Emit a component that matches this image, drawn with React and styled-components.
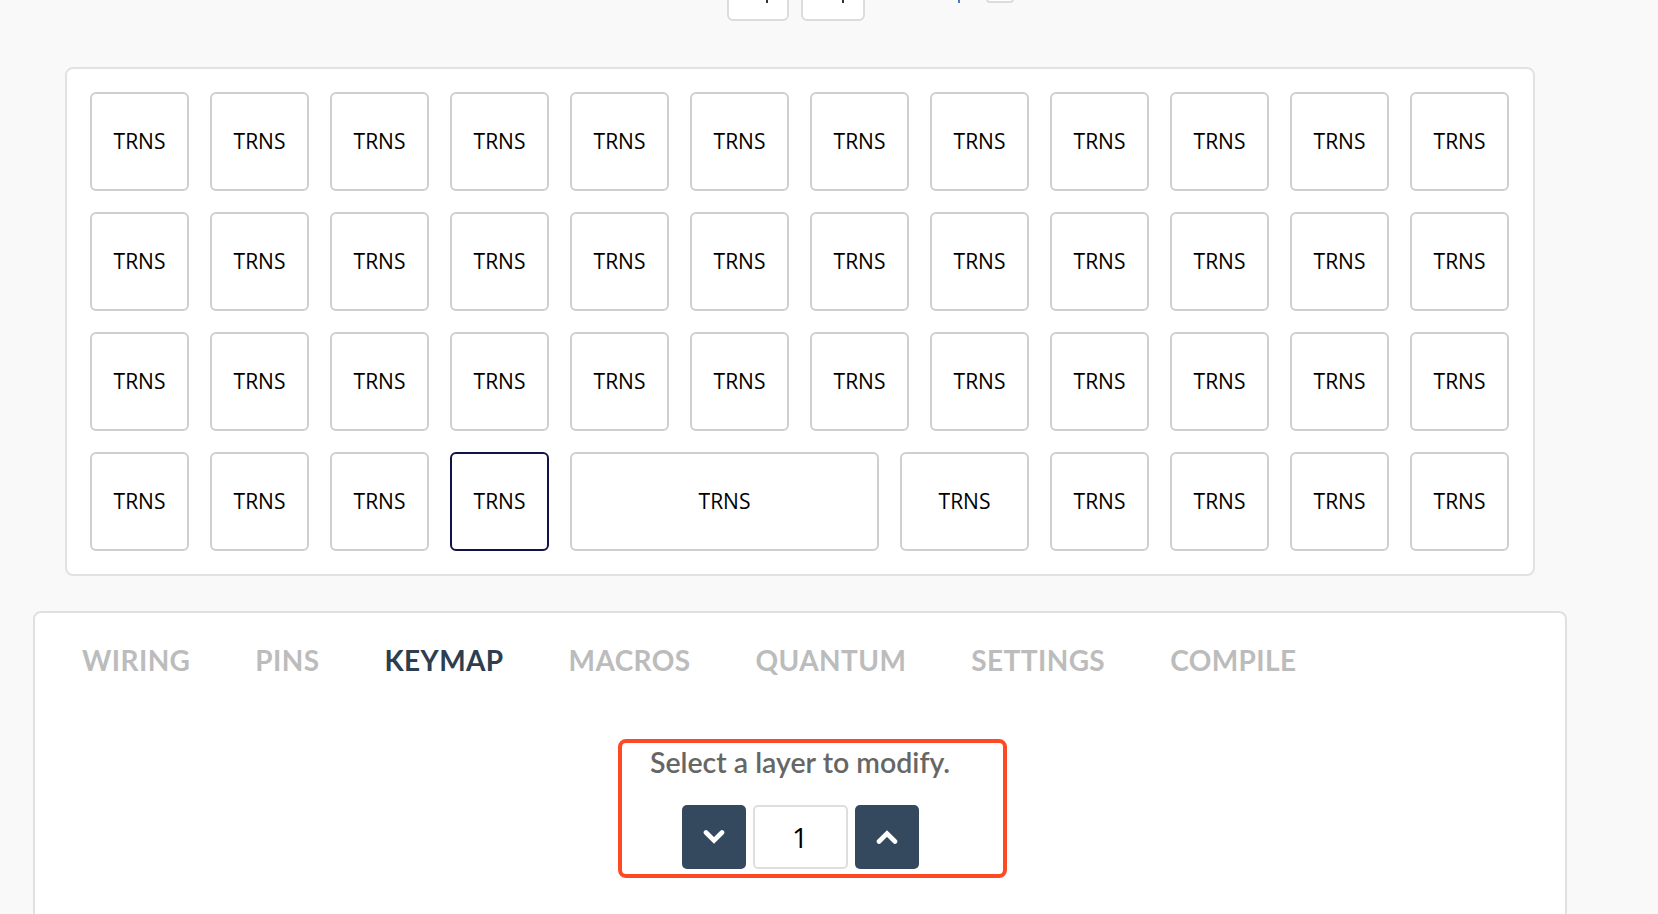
import React, { useState } from 'react'
import styled, { createGlobalStyle } from 'styled-components'

const GlobalStyle = createGlobalStyle`
  html, body {
    margin: 0;
    padding: 0;
    background: #f9f9f9;
    overflow: hidden;
  }
  * {
    box-sizing: border-box;
  }
`

const Page = styled.div`
  width: 1534px;
  margin-left: 33px;
  height: 914px;
  font-family: Lato, 'Open Sans', sans-serif;
`

const TopBar = styled.div`
  display: flex;
  align-items: flex-end;
  height: 21px;
  overflow: hidden;
  padding-left: 694px;
`

const TopButton = styled.div`
  width: ${({ w }) => w}px;
  height: 40px;
  margin-right: ${({ mr }) => mr}px;
  background: #fff;
  border: 2px solid #dcdcdc;
  border-radius: 6px;
  display: flex;
  align-items: flex-end;
  padding: 0 0 16px ${({ mark }) => mark}px;
`

const Mark = styled.span`
  width: 2px;
  height: 3px;
  background: ${({ color }) => color || '#333'};
  margin-bottom: ${({ mb }) => mb || 0}px;
`

const LayerBox = styled.div`
  width: 28px;
  height: 20px;
  margin-left: 26px;
  margin-bottom: 18px;
  border: 2px solid #dcdcdc;
  border-radius: 4px;
  background: #fff;
`

const KeyboardPanel = styled.div`
  width: 1470px;
  margin: 46px 0 0 32px;
  background: #fff;
  border: 2px solid #e2e2e2;
  border-radius: 8px;
  padding: 23px;
  display: flex;
  flex-direction: column;
  gap: 21px;
`

const KeyRow = styled.div`
  display: flex;
  gap: 21px;
`

const Key = styled.div`
  width: ${({ u }) => u * 120 - 21}px;
  height: 99px;
  border: 2px solid ${({ selected }) => (selected ? '#12124a' : '#cfcfcf')};
  border-radius: 6px;
  background: #fff;
  display: flex;
  align-items: center;
  justify-content: center;
  padding-bottom: 2px;
  font-family: 'Open Sans', sans-serif;
  font-size: 21px;
  color: #000;
  cursor: pointer;
`

const TabPanel = styled.div`
  margin-top: 35px;
  width: 1534px;
  height: 400px;
  background: #fff;
  border: 2px solid #e0e0e0;
  border-radius: 8px;
`

const Tabs = styled.div`
  display: flex;
  gap: 65px;
  padding: 30px 0 0 47px;
`

const Tab = styled.div`
  font-family: Lato, sans-serif;
  font-weight: 700;
  font-size: 28px;
  letter-spacing: 0.4px;
  color: ${({ active }) => (active ? '#2c3e50' : '#bcbcbc')};
  cursor: pointer;
`

const LayerSection = styled.div`
  position: relative;
  width: max-content;
  margin: 68px auto 0;
  display: flex;
  flex-direction: column;
  align-items: center;
  gap: 26px;
`

const Highlight = styled.div`
  position: absolute;
  left: 50%;
  margin-left: -182px;
  width: 389px;
  top: -6px;
  height: 139px;
  border: 4px solid #fd4a24;
  border-radius: 8px;
  pointer-events: none;
`

const Prompt = styled.div`
  font-family: Lato, sans-serif;
  font-weight: 600;
  font-size: 28.5px;
  color: #666;
`

const Stepper = styled.div`
  display: flex;
  gap: 7px;
`

const StepButton = styled.button`
  width: 64px;
  height: 64px;
  border: none;
  border-radius: 5px;
  background: #34495e;
  color: #fff;
  display: flex;
  align-items: center;
  justify-content: center;
  padding: 0;
  cursor: pointer;
`

const LayerInput = styled.div`
  width: 95px;
  height: 64px;
  border: 2px solid #dedede;
  border-radius: 5px;
  background: #fff;
  display: flex;
  align-items: center;
  justify-content: center;
  font-family: 'Open Sans', sans-serif;
  font-size: 28px;
  color: #000;
`

const Chevron = ({ up }) => (
  <svg width="22" height="14" viewBox="0 0 22 14">
    <polyline
      points={up ? '3,11.5 11,3.5 19,11.5' : '3,2.5 11,10.5 19,2.5'}
      fill="none"
      stroke="#fff"
      strokeWidth="4.6"
      strokeLinecap="round"
      strokeLinejoin="miter"
    />
  </svg>
)

const rows = [
  [1, 1, 1, 1, 1, 1, 1, 1, 1, 1, 1, 1],
  [1, 1, 1, 1, 1, 1, 1, 1, 1, 1, 1, 1],
  [1, 1, 1, 1, 1, 1, 1, 1, 1, 1, 1, 1],
  [1, 1, 1, 1, 2.75, 1.25, 1, 1, 1, 1],
]

const tabs = ['WIRING', 'PINS', 'KEYMAP', 'MACROS', 'QUANTUM', 'SETTINGS', 'COMPILE']

export default function App() {
  const [layer, setLayer] = useState(1)
  const [selected, setSelected] = useState('3-3')

  return (
    <Page>
      <GlobalStyle />
      <TopBar>
        <TopButton w={62} mr={12} mark={37}>
          <Mark />
        </TopButton>
        <TopButton w={64} mr={93} mark={39}>
          <Mark />
        </TopButton>
        <Mark color="#4a7db5" mb={18} />
        <LayerBox />
      </TopBar>

      <KeyboardPanel>
        {rows.map((row, r) => (
          <KeyRow key={r}>
            {row.map((u, c) => (
              <Key
                key={c}
                u={u}
                selected={selected === `${r}-${c}`}
                onClick={() => setSelected(`${r}-${c}`)}
              >
                TRNS
              </Key>
            ))}
          </KeyRow>
        ))}
      </KeyboardPanel>

      <TabPanel>
        <Tabs>
          {tabs.map(t => (
            <Tab key={t} active={t === 'KEYMAP'}>
              {t}
            </Tab>
          ))}
        </Tabs>
        <LayerSection>
          <Highlight />
          <Prompt>Select a layer to modify.</Prompt>
          <Stepper>
            <StepButton onClick={() => setLayer(l => Math.max(0, l - 1))}>
              <Chevron />
            </StepButton>
            <LayerInput>{layer}</LayerInput>
            <StepButton onClick={() => setLayer(l => l + 1)}>
              <Chevron up />
            </StepButton>
          </Stepper>
        </LayerSection>
      </TabPanel>
    </Page>
  )
}
